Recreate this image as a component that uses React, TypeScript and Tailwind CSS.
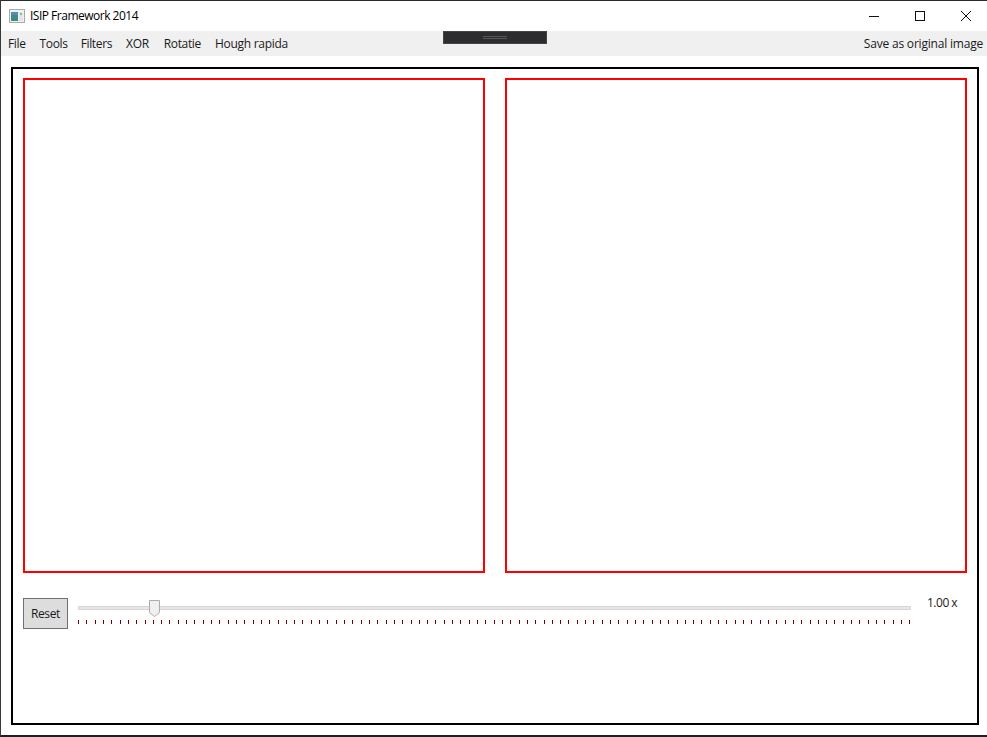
const menu = [
  { label: "File", cls: "pl-[7px] pr-[7px] tracking-[-0.35px]" },
  { label: "Tools", cls: "px-[7px] tracking-[-0.35px]" },
  { label: "Filters", cls: "pl-[6px] pr-[7px] tracking-[-0.35px]" },
  { label: "XOR", cls: "pl-[7px] pr-[8px] tracking-[-0.35px]" },
  { label: "Rotatie", cls: "px-[7px] tracking-[-0.35px]" },
  { label: "Hough rapida", cls: "px-[7px] tracking-[-0.28px]" },
];
const ticks = Array.from({ length: 101 }, (_, i) => i);
const font = "font-['Open_Sans','Noto_Sans',sans-serif]";

function Panel() {
  return <div className="h-[495px] w-[462px] border-2 border-[#ff0000] bg-white" />;
}

export default function App() {
  return (
    <div className={`relative flex h-[737px] w-[987px] flex-col overflow-hidden border-t border-l border-b-2 border-t-[#2a2a2a] border-l-[#3a3a3a] border-b-[#1c2127] bg-white text-[12px] text-[#1a1a1a] ${font}`}>
      <div className="flex h-[30px] items-center">
        <svg className="ml-[8px]" width="16" height="14" viewBox="0 0 16 14">
          <rect x="0.5" y="0.5" width="15" height="13" fill="#f2f2f2" stroke="#a9a9a9" />
          <rect x="2" y="3" width="7" height="9" fill="#3f8a86" />
          <rect x="2" y="3" width="7" height="3" fill="#5d88b5" />
          <rect x="10" y="3" width="4" height="9" fill="#dfe6e4" />
          <rect x="11" y="4" width="2" height="2" fill="#8fb8a8" />
        </svg>
        <span className="ml-[5px] tracking-[-0.5px] text-black">ISIP Framework 2014</span>
        <div className="ml-auto mr-[-2px] flex">
          <div className="flex h-[30px] w-[46px] items-center justify-center">
            <svg width="10" height="10" viewBox="0 0 10 10"><path d="M0 5.5H10" stroke="#111" fill="none" /></svg>
          </div>
          <div className="flex h-[30px] w-[46px] items-center justify-center">
            <svg width="10" height="10" viewBox="0 0 10 10"><rect x="0.5" y="0.5" width="9" height="9" stroke="#111" fill="none" /></svg>
          </div>
          <div className="flex h-[30px] w-[46px] items-center justify-center">
            <svg width="10" height="10" viewBox="0 0 10 10"><path d="M0 0L10 10M10 0L0 10" stroke="#111" fill="none" strokeWidth="1" /></svg>
          </div>
        </div>
      </div>

      <div className="flex h-[25px] items-center justify-between bg-[#f0f0f0]">
        <div className="flex">
          {menu.map((m) => (
            <span key={m.label} className={m.cls}>{m.label}</span>
          ))}
        </div>
        <span className="mr-[4px] tracking-[-0.2px]">Save as original image</span>
      </div>

      <div className="absolute left-[442px] top-[30px] flex h-[13px] w-[104px] flex-col items-center justify-center gap-[1px] border border-[#43454b] bg-[#2d2d30]">
        <div className="h-px w-[24px] bg-[#55565a]" />
        <div className="h-px w-[24px] bg-[#55565a]" />
      </div>

      <div className="mt-[11px] mr-[8px] mb-[10px] ml-[10px] flex flex-1 flex-col border-2 border-black px-[10px] pt-[9px]">
        <div className="flex gap-[20px]">
          <Panel />
          <Panel />
        </div>
        <div className="mt-[25px] flex items-start">
          <button className="flex h-[31px] w-[45px] items-center justify-center border border-[#707070] bg-[#dddddd] tracking-[-0.35px]">Reset</button>
          <div className="relative ml-[10px] mt-[8px] w-[833px]">
            <div className="h-[4px] border border-[#d6d6d6] bg-[#e7e7e7]" />
            <svg className="absolute left-[71px] top-[-6px]" width="11" height="17" viewBox="0 0 11 17">
              <path d="M0.5 0.5H10.5V12.5L5.5 16.5L0.5 12.5Z" fill="#f0f0f0" stroke="#acacac" />
            </svg>
            <div className="mt-[10px] flex justify-between">
              {ticks.map((t) => (
                <div key={t} className="h-[4px] w-px bg-[#7a0000]" />
              ))}
            </div>
          </div>
          <span className="ml-[16px] mt-[-4px] tracking-[-0.5px]">1.00 x</span>
        </div>
      </div>
    </div>
  );
}
